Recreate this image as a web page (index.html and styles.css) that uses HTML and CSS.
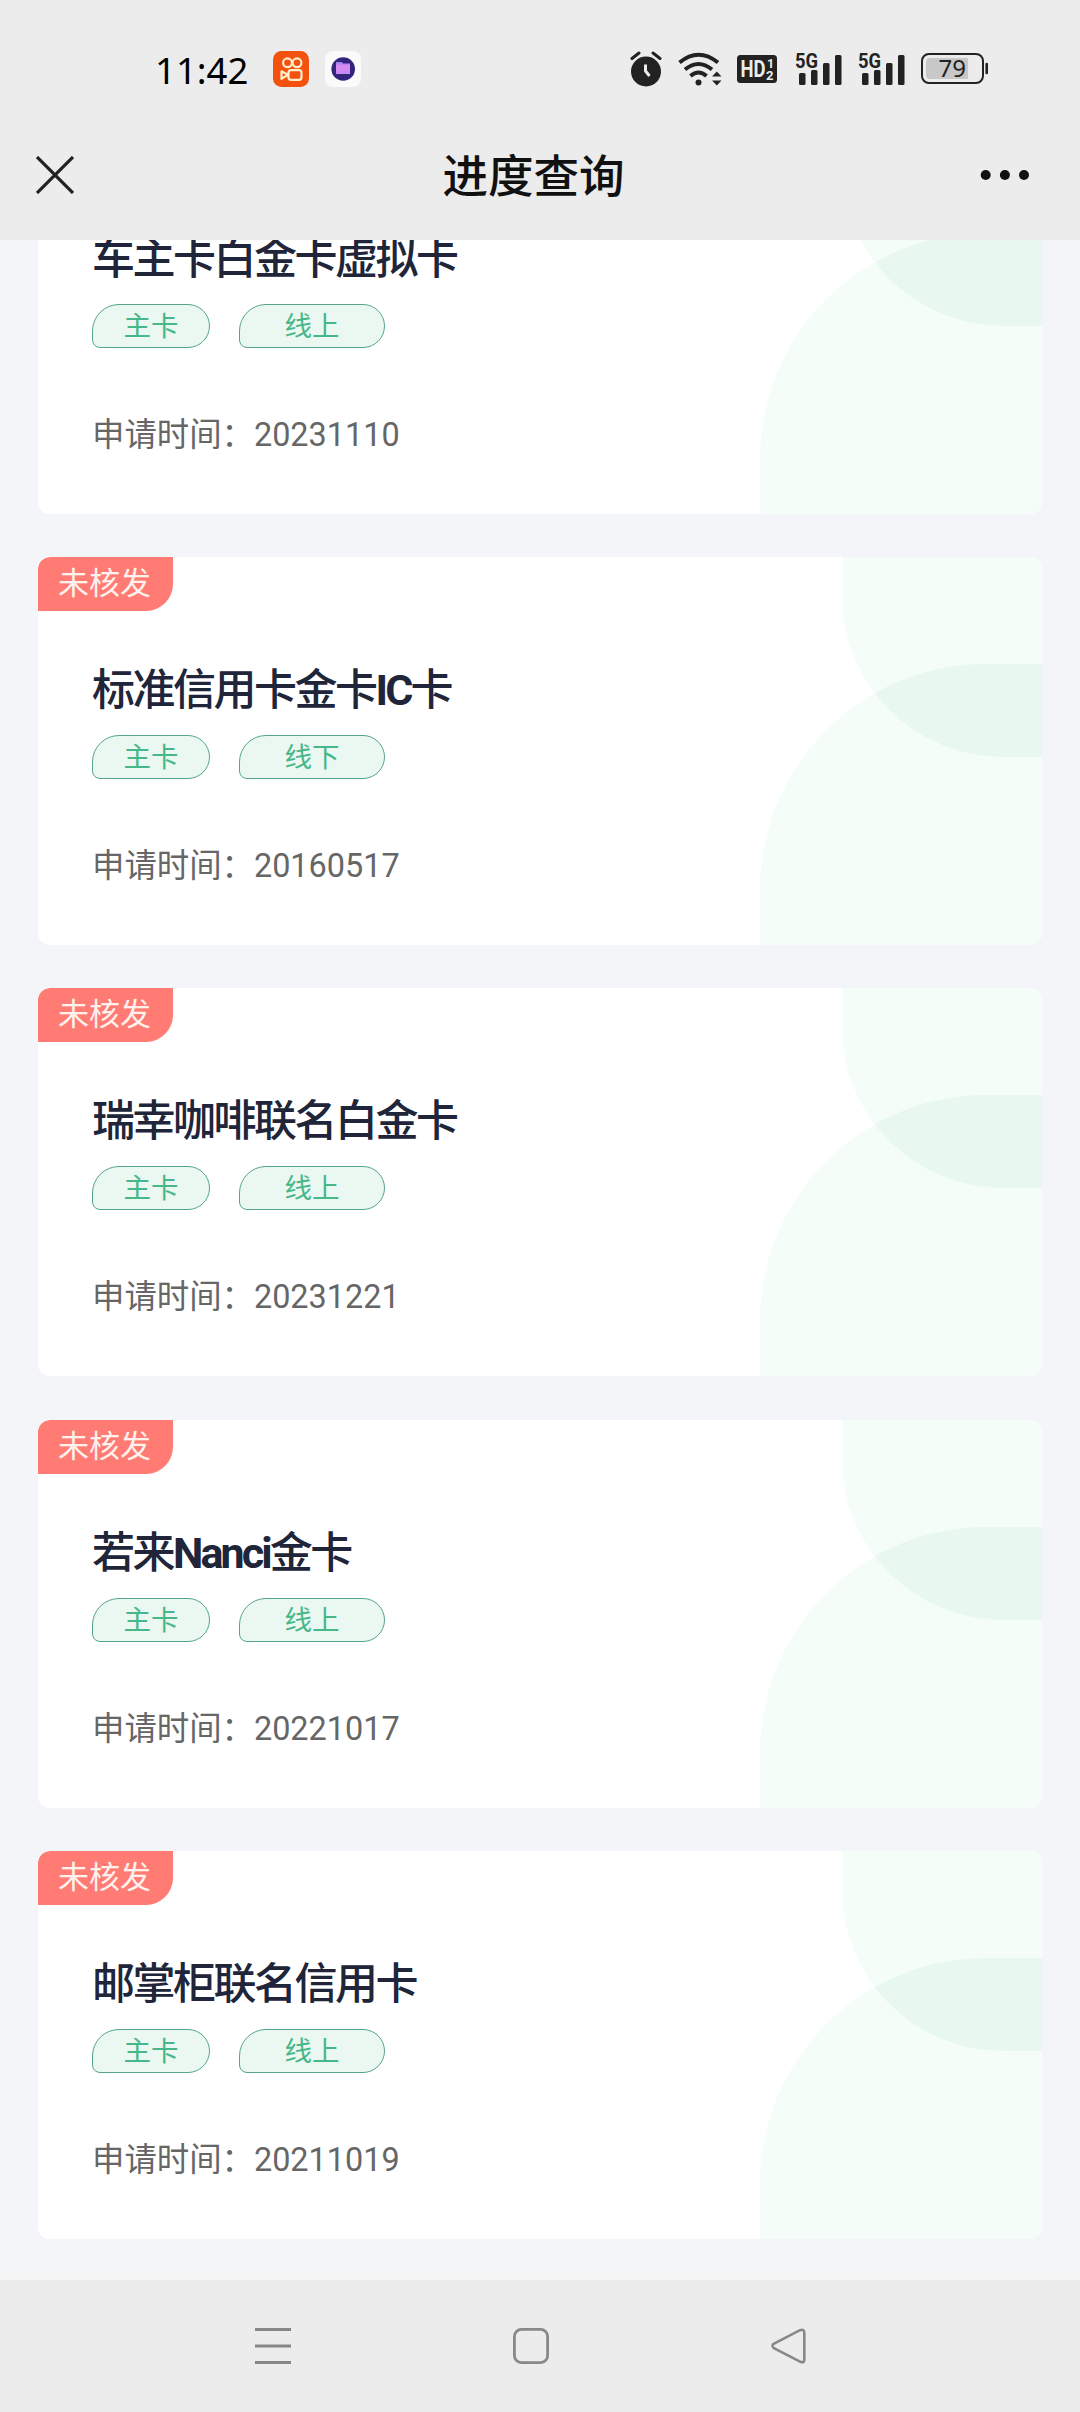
FILE: index.html
```html
<!DOCTYPE html>
<html lang="zh-CN">
<head>
<meta charset="utf-8">
<title>进度查询</title>
<link rel="stylesheet" href="styles.css">
</head>
<body>
<svg class="defs" width="0" height="0" aria-hidden="true">
  <defs>
    <clipPath id="upper"><path d="M82 0V39A161 161 0 0 0 243 200H282V0Z"/></clipPath>
    <symbol id="arcs" viewBox="0 0 282 388">
      <path fill="#f4fdf8" d="M82 0V39A161 161 0 0 0 243 200H282V0Z"/>
      <path fill="#f4fdf8" d="M0 388V333A226 226 0 0 1 226 107H282V388Z"/>
      <path fill="#e8f8f1" clip-path="url(#upper)" d="M0 388V333A226 226 0 0 1 226 107H282V388Z"/>
    </symbol>
    <symbol id="signal" viewBox="0 0 48 36" overflow="visible">
      <g fill="#222"><rect x="4" y="22" width="6.5" height="12" rx="1.5"/><rect x="16" y="19" width="6.5" height="15" rx="1.5"/><rect x="28" y="12" width="6.5" height="22" rx="1.5"/><rect x="40" y="4" width="6.5" height="30" rx="1.5"/></g>
      <text x="0" y="16.5" font-family="Roboto, sans-serif" font-size="20.5" font-weight="700" textLength="23" lengthAdjust="spacingAndGlyphs" fill="#222">5G</text>
    </symbol>
  </defs>
</svg>
<div class="screen">
  <header class="top">
    <div class="status">
      <span class="clock">11:42</span>
      <svg class="app-video" width="36" height="36" viewBox="0 0 36 36"><rect width="36" height="36" rx="8.5" fill="#f4500e"/><g fill="none" stroke="#ffeecb" stroke-width="2.2"><circle cx="14.5" cy="11.8" r="4.4"/><circle cx="24" cy="11.8" r="4.4"/><rect x="15.5" y="19.2" width="13" height="9.6" rx="2.5"/><path d="M15 23.8 8.5 20.3v7.6z" stroke-linejoin="round"/></g></svg>
      <svg class="app-folder" width="36" height="36" viewBox="0 0 36 36"><defs><linearGradient id="pk" x2="0" y2="1"><stop stop-color="#8d7ff0"/><stop offset=".35" stop-color="#e08af0"/><stop offset="1" stop-color="#c18cf4"/></linearGradient></defs><rect width="36" height="36" rx="8" fill="#fafafa"/><circle cx="18.2" cy="18" r="11.8" fill="#34257c"/><path d="M11 11h6l1 1.5h7V23H11z" fill="url(#pk)"/></svg>
      <div class="indicators">
        <svg width="32" height="36" viewBox="0 0 32 36"><circle cx="16" cy="20.5" r="15" fill="#222"/><path d="M2 7.5 9 2M30 7.5 23 2" stroke="#222" stroke-width="3" stroke-linecap="round"/><path d="M15.5 13.5v6.5l4 5" fill="none" stroke="#ececec" stroke-width="3"/></svg>
        <svg class="wifi" width="44" height="36" viewBox="0 0 44 36"><g fill="none" stroke="#222" stroke-width="4"><path d="M1.5 11.5Q20.5-4 40 11.5"/><path d="M7 18.5Q20.5 7.5 34 18.5"/><path d="M12.5 25Q20.5 18 28.5 25"/></g><circle cx="20.5" cy="31.5" r="3" fill="#222"/><path d="M34 25.5 38.8 20.5 43.5 25.5zM34 29.5 38.8 34.5 43.5 29.5z" fill="#222"/></svg>
        <svg class="hd" width="40" height="28" viewBox="0 0 40 28"><rect width="40" height="28" rx="3.5" fill="#222"/><g font-family="Roboto, sans-serif" font-weight="700" fill="#ececec"><text x="3.5" y="22" font-size="23" textLength="25" lengthAdjust="spacingAndGlyphs">HD</text><text x="30" y="13" font-size="12.5">1</text><text x="29" y="24.5" font-size="13">2</text></g></svg>
        <svg class="sig1" width="48" height="36" overflow="visible"><use href="#signal"/></svg>
        <svg class="sig2" width="48" height="36" overflow="visible"><use href="#signal"/></svg>
        <svg class="battery" width="68" height="32" viewBox="0 0 68 32"><rect x="1" y="1" width="61" height="29" rx="7" fill="none" stroke="#222" stroke-width="2"/><path d="M9 5H47V26H9Q5 26 5 22V9Q5 5 9 5Z" fill="#c8c8c8"/><path d="M65.7 11v9" stroke="#222" stroke-width="2.6" stroke-linecap="round"/><text x="17.5" y="24.3" font-family="'Noto Sans', sans-serif" font-size="24" fill="#222">79</text></svg>
      </div>
    </div>
    <div class="titlebar">
      <svg class="close" width="38" height="38" viewBox="0 0 38 38"><path d="M1 1 37 37M37 1 1 37" stroke="#222" stroke-width="3.2"/></svg>
      <h1 class="title">进度查询</h1>
      <svg class="more" width="50" height="12" viewBox="0 0 50 12" fill="#111"><circle cx="5.7" cy="6" r="5"/><circle cx="24.9" cy="6" r="5"/><circle cx="44" cy="6" r="5"/></svg>
    </div>
  </header>

  <main class="list">
    <article class="card">
      <svg class="arcs"><use href="#arcs"/></svg>
      <h2 class="name">车主卡白金卡虚拟卡</h2>
      <div class="tags"><span class="tag">主卡</span><span class="tag wide">线上</span></div>
      <p class="date">申请时间：20231110</p>
    </article>
    <article class="card">
      <svg class="arcs"><use href="#arcs"/></svg><span class="badge">未核发</span>
      <h2 class="name">标准信用卡金卡<span class="latin">IC</span>卡</h2>
      <div class="tags"><span class="tag">主卡</span><span class="tag wide">线下</span></div>
      <p class="date">申请时间：20160517</p>
    </article>
    <article class="card">
      <svg class="arcs"><use href="#arcs"/></svg><span class="badge">未核发</span>
      <h2 class="name">瑞幸咖啡联名白金卡</h2>
      <div class="tags"><span class="tag">主卡</span><span class="tag wide">线上</span></div>
      <p class="date">申请时间：20231221</p>
    </article>
    <article class="card">
      <svg class="arcs"><use href="#arcs"/></svg><span class="badge">未核发</span>
      <h2 class="name">若来<span class="latin">Nanci</span>金卡</h2>
      <div class="tags"><span class="tag">主卡</span><span class="tag wide">线上</span></div>
      <p class="date">申请时间：20221017</p>
    </article>
    <article class="card">
      <svg class="arcs"><use href="#arcs"/></svg><span class="badge">未核发</span>
      <h2 class="name">邮掌柜联名信用卡</h2>
      <div class="tags"><span class="tag">主卡</span><span class="tag wide">线上</span></div>
      <p class="date">申请时间：20211019</p>
    </article>
  </main>

  <nav class="nav">
    <svg width="36" height="36" viewBox="0 0 36 36"><path d="M0 1.5H36M0 18H36M0 34.5H36" stroke="#888" stroke-width="3"/></svg>
    <svg width="36" height="36" viewBox="0 0 36 36"><rect x="1.4" y="1.4" width="33.2" height="33.2" rx="7" fill="none" stroke="#888" stroke-width="2.8"/></svg>
    <svg width="36" height="36" viewBox="0 0 36 36"><path d="M2.6 15.8 29 2.2Q33.3 .5 33.3 5V31.500Q33.3 35.5 29.5 33.8L2.9 20.2Q.2 18 2.6 15.8Z" fill="none" stroke="#888" stroke-width="2.6"/></svg>
  </nav>
</div>
</body>
</html>
```
FILE: styles.css
```css
* { box-sizing: border-box; }

body {
  margin: 0;
  background: #f4f5f8;
  font-family: Roboto, "Noto Sans CJK SC", sans-serif;
}

h1, h2, p { margin: 0; }

svg { display: block; flex: none; }

.defs { position: absolute; }

.screen {
  display: flex;
  flex-direction: column;
  width: 1080px;
  height: 2412px;
  overflow: hidden;
}

.top {
  flex: none;
  height: 240px;
  background: #ececec;
}

.status {
  display: flex;
  align-items: center;
  height: 138px;
  padding: 0 91px 0 155px;
}

.clock {
  width: 118px;
  padding-top: 2px;
  font: 450 36.5px/50px "Noto Sans", sans-serif;
  color: #000;
}

.app-folder { margin-left: 16px; }

.indicators {
  display: flex;
  align-items: center;
  margin-left: auto;
}

.wifi { margin-left: 16px; }
.hd { margin-left: 15px; }
.sig1 { margin-left: 18px; }
.sig2 { margin-left: 15px; }
.battery { margin-left: 15px; }

.titlebar {
  display: flex;
  align-items: center;
  justify-content: space-between;
  height: 74px;
  padding: 0 50px 0 36px;
}

.title {
  padding: 6px 0 0 13px;
  font-size: 45.5px;
  line-height: 64px;
  font-weight: 500;
  color: #111;
}

.list {
  display: flex;
  flex: none;
  flex-direction: column;
  justify-content: flex-end;
  gap: 43.33px;
  height: 2030px;
  padding: 0 38px 31px;
  overflow: hidden;
}

.card {
  position: relative;
  flex: none;
  height: 388px;
  padding: 103px 0 0 54px;
  border-radius: 12px;
  background: #fff;
  overflow: hidden;
}

.arcs {
  position: absolute;
  top: 0;
  right: 0;
  width: 282px;
  height: 388px;
}

.badge {
  position: absolute;
  top: 0;
  left: 0;
  width: 135px;
  height: 54px;
  padding-left: 20px;
  border-radius: 12px 0 27px 0;
  background: #ff7b73;
  color: #fff2ee;
  font-size: 31px;
  line-height: 54px;
}

.name {
  height: 60px;
  font-size: 43px;
  line-height: 60px;
  font-weight: 500;
  letter-spacing: -2.5px;
  color: #20253a;
}

.latin {
  font-weight: 700;
  letter-spacing: -2.9px;
}

.tags {
  display: flex;
  gap: 29px;
  margin-top: 15px;
}

.tag {
  width: 118px;
  height: 44px;
  border: 1px solid #55a688;
  border-radius: 27px 22px 22px 8px;
  background: #eaf8f1;
  color: #45b789;
  font-size: 27.5px;
  line-height: 43px;
  text-align: center;
}

.wide { width: 146px; }

.date {
  margin-top: 65px;
  font-size: 32.4px;
  line-height: 44px;
  color: #666;
}

.nav {
  display: flex;
  align-items: center;
  justify-content: space-between;
  height: 142px;
  padding: 0 273px 0 255px;
  border-top: 10px solid #f5f5f5;
  background: #ececec;
}
```
